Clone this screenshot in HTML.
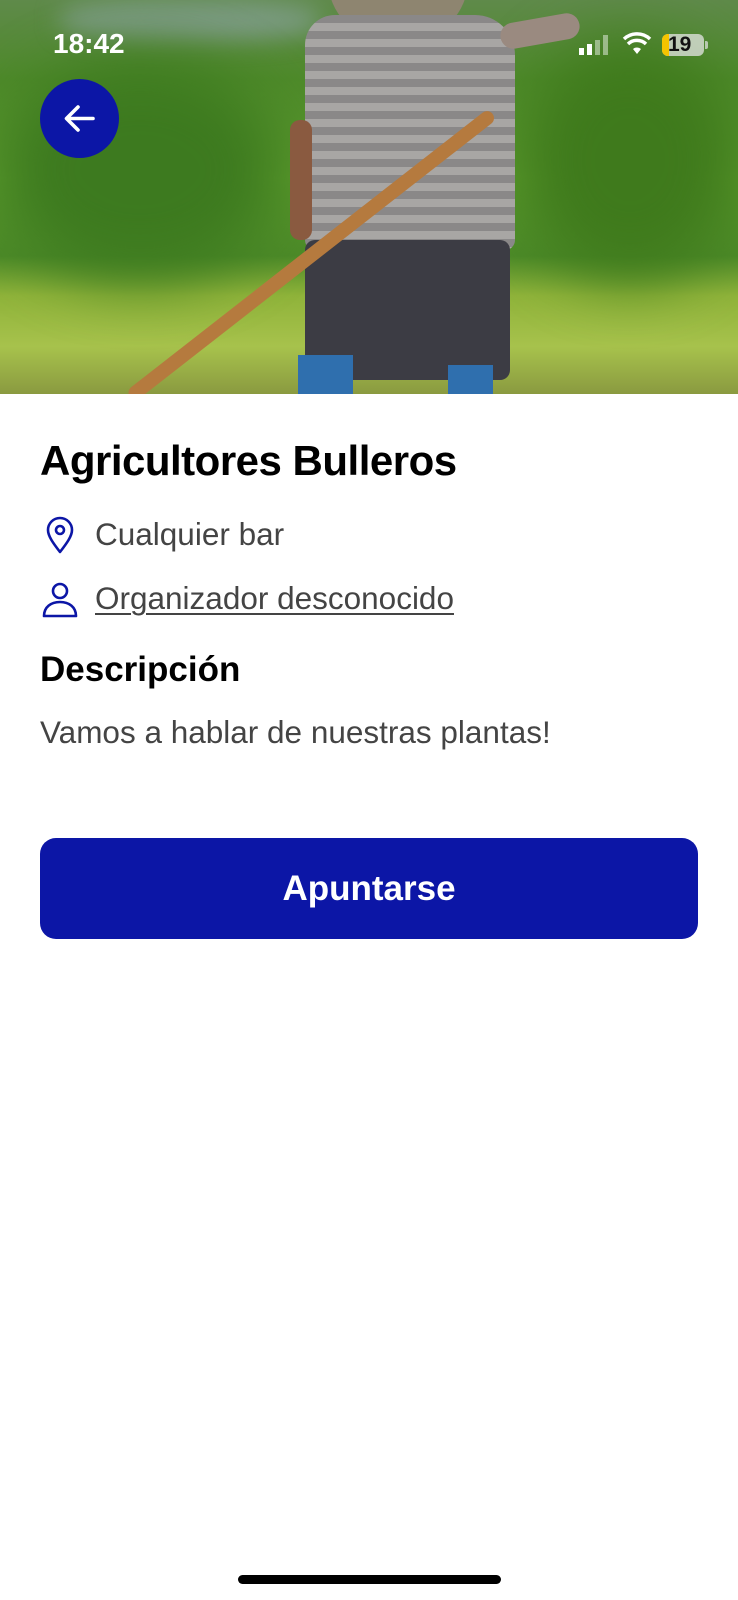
<!DOCTYPE html>
<html><head><meta charset="utf-8"><style>
*{margin:0;padding:0;box-sizing:border-box}
body{width:738px;height:1600px;background:#fff;font-family:"Liberation Sans",Arial,sans-serif;position:relative;overflow:hidden}
.photo{position:absolute;left:0;top:0;width:738px;height:394px;overflow:hidden;
background:linear-gradient(180deg,#5f8a4a 0%,#4e8a2a 20%,#5a9a2c 45%,#4c8a28 65%,#8fb33a 75%,#a7c24c 88%,#8a9a40 100%)}
.abs{position:absolute}
.t{position:absolute;white-space:nowrap}
</style></head><body>
<div class="photo">
 <div class="abs" style="left:60px;top:0;width:260px;height:40px;background:#7a9a80;filter:blur(12px);border-radius:40%"></div>
 <div class="abs" style="left:0;top:60px;width:280px;height:220px;background:#3d7a1f;filter:blur(30px);border-radius:50%"></div>
 <div class="abs" style="left:520px;top:40px;width:220px;height:240px;background:#3f7a1c;filter:blur(30px);border-radius:50%"></div>
 <div class="abs" style="left:328px;top:-20px;width:140px;height:60px;background:#8e8570;border-radius:0 0 60px 60px"></div>
 <div class="abs" style="left:305px;top:15px;width:210px;height:235px;background:repeating-linear-gradient(180deg,#8a8888 0 8px,#a8a6a4 8px 16px);border-radius:30px 40px 10px 10px"></div>
 <div class="abs" style="left:500px;top:18px;width:80px;height:26px;background:#9a8a80;border-radius:14px;transform:rotate(-10deg)"></div>
 <div class="abs" style="left:290px;top:120px;width:22px;height:120px;background:#8a5a40;border-radius:10px"></div>
 <div class="abs" style="left:305px;top:240px;width:205px;height:140px;background:#3c3c44;border-radius:10px"></div>
 <div class="abs" style="left:298px;top:355px;width:55px;height:40px;background:#2f6fae"></div>
 <div class="abs" style="left:448px;top:365px;width:45px;height:30px;background:#2f6fae"></div>
 <div class="abs" style="width:460px;height:14px;background:#b57a3e;transform:rotate(-38deg);transform-origin:left center;top:390px;left:130px;border-radius:7px"></div>
</div>
<div class="t" style="left:53px;top:28px;font-size:28px;color:#fff;font-weight:bold">18:42</div>
<div class="abs" style="left:579px;top:48px;width:5px;height:7px;background:#fff"></div>
<div class="abs" style="left:587px;top:44px;width:5px;height:11px;background:#fff"></div>
<div class="abs" style="left:595px;top:40px;width:5px;height:15px;background:rgba(255,255,255,.45)"></div>
<div class="abs" style="left:603px;top:35px;width:5px;height:20px;background:rgba(255,255,255,.45)"></div>
<svg class="abs" style="left:622px;top:32px" width="30" height="24" viewBox="0 0 30 24"><path d="M15 22 L11 17 A6 6 0 0 1 19 17Z" fill="#fff"/><path d="M6 12 A13 13 0 0 1 24 12" stroke="#fff" stroke-width="3.5" fill="none"/><path d="M2 7 A19 19 0 0 1 28 7" stroke="#fff" stroke-width="3.5" fill="none"/></svg>
<div class="abs" style="left:662px;top:34px;width:42px;height:22px;border-radius:6px;background:rgba(230,230,230,.75);overflow:hidden"><div style="width:7px;height:100%;background:#f5c400"></div></div>
<div class="t" style="left:668px;top:33px;font-size:21px;font-weight:bold;color:#111">19</div>
<div class="abs" style="left:705px;top:41px;width:3px;height:8px;background:rgba(230,230,230,.7);border-radius:0 2px 2px 0"></div>
<div class="abs" style="left:40px;top:79px;width:79px;height:79px;border-radius:50%;background:#0c16a6"></div>
<svg class="abs" style="left:40px;top:79px" width="79" height="79" viewBox="0 0 79 79"><path d="M53 39.5H27M38 28L26.5 39.5L38 51" stroke="#fff" stroke-width="3.6" fill="none" stroke-linecap="round" stroke-linejoin="round"/></svg>
<div class="t" style="left:40px;top:437px;font-size:42px;font-weight:bold;color:#000;letter-spacing:-0.5px">Agricultores Bulleros</div>
<svg class="abs" style="left:44px;top:516px" width="32" height="38" viewBox="0 0 32 38"><path d="M16 36C9 27 4 20 4 14A12 12 0 0 1 28 14C28 20 23 27 16 36Z" stroke="#0c16a6" stroke-width="2.6" fill="none" stroke-linejoin="round"/><circle cx="16" cy="14" r="4" stroke="#0c16a6" stroke-width="2.6" fill="none"/></svg>
<div class="t" style="left:95px;top:516px;font-size:31.5px;color:#444">Cualquier bar</div>
<svg class="abs" style="left:41px;top:581px" width="38" height="38" viewBox="0 0 38 38"><circle cx="19" cy="10" r="7" stroke="#0c16a6" stroke-width="2.6" fill="none"/><path d="M3 35C3 26 10 21 19 21S35 26 35 35Z" stroke="#0c16a6" stroke-width="2.6" fill="none" stroke-linejoin="round"/></svg>
<div class="t" style="left:95px;top:580px;font-size:31.5px;color:#444;text-decoration:underline;text-decoration-thickness:2px;text-underline-offset:4px">Organizador desconocido</div>
<div class="t" style="left:40px;top:650px;font-size:35px;font-weight:bold;color:#000">Descripción</div>
<div class="t" style="left:40px;top:714px;font-size:31.5px;color:#444">Vamos a hablar de nuestras plantas!</div>
<div class="abs" style="left:40px;top:838px;width:658px;height:101px;border-radius:16px;background:#0c16a6;color:#fff;font-weight:bold;font-size:35px;text-align:center;line-height:101px">Apuntarse</div>
<div class="abs" style="left:238px;top:1575px;width:263px;height:9px;border-radius:5px;background:#000"></div>
</body></html>
